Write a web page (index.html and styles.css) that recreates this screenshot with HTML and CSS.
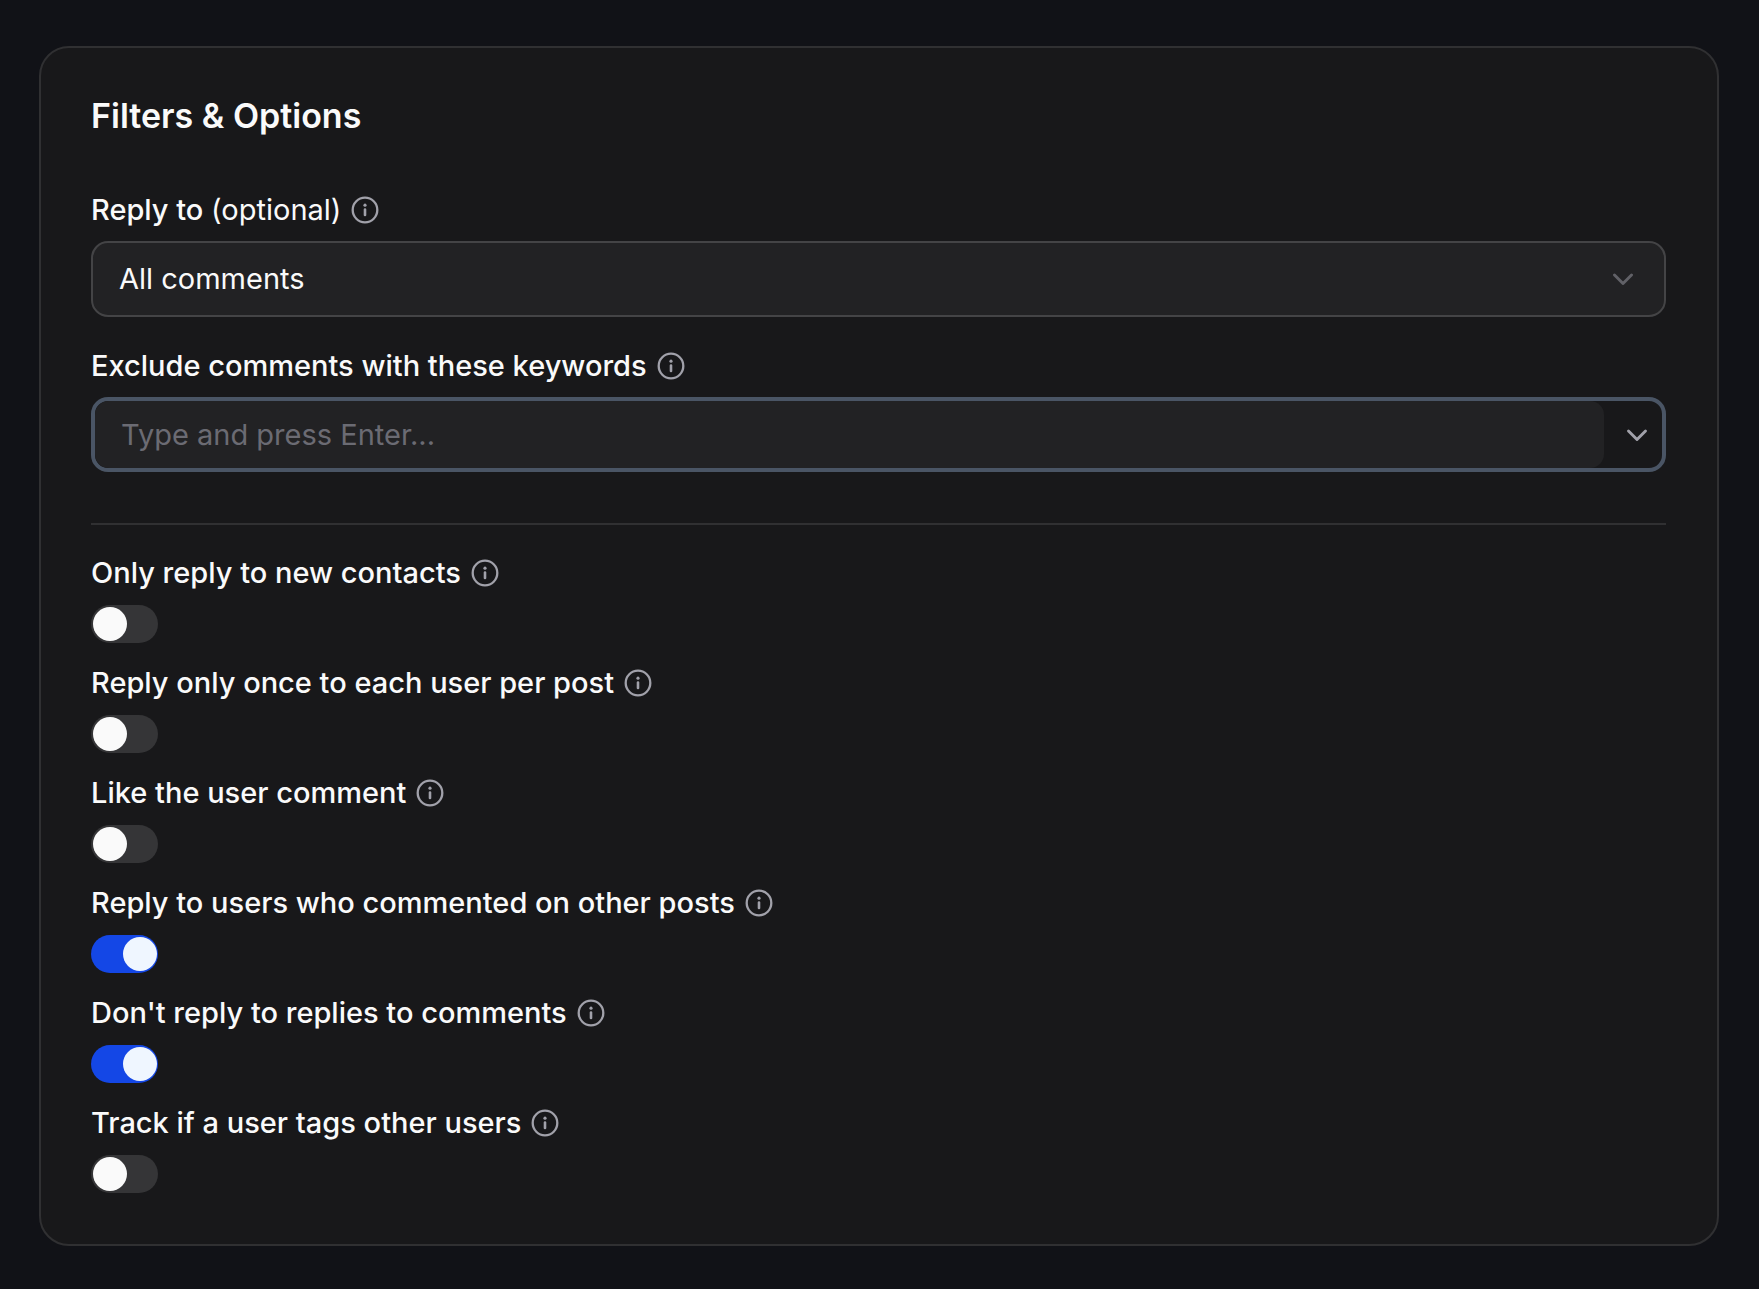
FILE: index.html
```html
<!DOCTYPE html>
<html lang="en">
<head>
<meta charset="utf-8">
<meta name="viewport" content="width=device-width, initial-scale=1">
<title>Filters &amp; Options</title>
<link rel="stylesheet" href="styles.css">
</head>
<body>
<svg class="sprite" aria-hidden="true">
  <symbol id="info" viewBox="0 0 28 28">
    <circle cx="14" cy="14" r="12.3" fill="none" stroke="currentColor" stroke-width="2.3"/>
    <path d="M14 13.600v5.400" fill="none" stroke="currentColor" stroke-width="2.600" stroke-linecap="round"/>
    <circle cx="14" cy="9.200" r="1.600" fill="currentColor"/>
  </symbol>
  <symbol id="chevron" viewBox="0 0 24 24">
    <path d="M3.500 8 12 16.500l8.500-8.500" fill="none" stroke="currentColor" stroke-width="2.900" stroke-linecap="round" stroke-linejoin="round"/>
  </symbol>
</svg>
<main class="card">
  <h1 class="title">Filters &amp; Options</h1>
  <form class="form">
    <div class="field">
      <div class="label-row">
        <label class="label" for="reply-to">Reply to <span class="optional">(optional)</span></label>
        <svg class="info"><use href="#info"/></svg>
      </div>
      <div class="select-box">
        <select class="select" id="reply-to"><option>All comments</option></select>
        <svg class="chevron"><use href="#chevron"/></svg>
      </div>
    </div>
    <div class="field">
      <div class="label-row">
        <label class="label" for="keywords">Exclude comments with these keywords</label>
        <svg class="info"><use href="#info"/></svg>
      </div>
      <div class="combo">
        <input class="combo-input" id="keywords" type="text" placeholder="Type and press Enter...">
        <button class="combo-button" type="button" aria-label="Show keywords"><svg class="chevron"><use href="#chevron"/></svg></button>
      </div>
    </div>
    <hr class="divider">
    <div class="options">
      <div class="option">
        <div class="label-row"><label class="label" for="new-contacts">Only reply to new contacts</label><svg class="info"><use href="#info"/></svg></div>
        <input class="switch" type="checkbox" role="switch" id="new-contacts">
      </div>
      <div class="option">
        <div class="label-row"><label class="label" for="once">Reply only once to each user per post</label><svg class="info"><use href="#info"/></svg></div>
        <input class="switch" type="checkbox" role="switch" id="once">
      </div>
      <div class="option">
        <div class="label-row"><label class="label" for="like">Like the user comment</label><svg class="info"><use href="#info"/></svg></div>
        <input class="switch" type="checkbox" role="switch" id="like">
      </div>
      <div class="option">
        <div class="label-row"><label class="label" for="other-posts">Reply to users who commented on other posts</label><svg class="info"><use href="#info"/></svg></div>
        <input class="switch" type="checkbox" role="switch" id="other-posts" checked>
      </div>
      <div class="option">
        <div class="label-row"><label class="label" for="no-replies">Don't reply to replies to comments</label><svg class="info"><use href="#info"/></svg></div>
        <input class="switch" type="checkbox" role="switch" id="no-replies" checked>
      </div>
      <div class="option">
        <div class="label-row"><label class="label" for="tags">Track if a user tags other users</label><svg class="info"><use href="#info"/></svg></div>
        <input class="switch" type="checkbox" role="switch" id="tags">
      </div>
    </div>
  </form>
</main>
</body>
</html>
```
FILE: styles.css
```css
* { box-sizing: border-box; }

body {
  margin: 0;
  padding: 46px 40px 43px 39px;
  background: #111217;
  color: #fafafa;
  font: 400 29px/38px Inter, sans-serif;
}

.sprite { display: none; }

.card {
  padding: 50px 51px 51px 50px;
  background: #18181a;
  border: 2px solid #303032;
  border-radius: 30px;
}

.title {
  margin: 0 0 57px;
  font-size: 34px;
  line-height: 36px;
  font-weight: 600;
}

.form { display: flex; flex-direction: column; }

.field { margin-bottom: 30px; }

.label-row {
  display: flex;
  align-items: center;
  gap: 10px;
}

.label { font-weight: 500; }
.optional { font-weight: 400; }

.info {
  flex: none;
  width: 28px;
  height: 28px;
  color: #a1a1aa;
}

.chevron {
  width: 24px;
  height: 24px;
  color: #a1a1aa;
}

.select-box {
  display: grid;
  grid-template-columns: 1fr 55px;
  align-items: center;
  margin-top: 12px;
}

.select {
  grid-area: 1 / 1 / 2 / 3;
  appearance: none;
  width: 100%;
  height: 76px;
  padding: 0 55px 0 26px;
  border: 2px solid #444446;
  border-radius: 17px;
  background: #222224;
  color: inherit;
  font: inherit;
}

.select-box .chevron {
  grid-area: 1 / 2;
  opacity: 0.5;
  pointer-events: none;
}

.combo {
  display: flex;
  height: 75px;
  margin-top: 12px;
  border: 4px solid #4a5565;
  border-radius: 17px;
}

.combo-input {
  flex: 1;
  min-width: 0;
  padding: 0 26px;
  border: 0;
  border-radius: 14px;
  background: #222224;
  color: inherit;
  font: inherit;
  outline: none;
}

.combo-input::placeholder { color: #6b6b73; opacity: 1; }

.combo-button {
  display: flex;
  align-items: center;
  justify-content: flex-end;
  width: 58px;
  padding: 0 13px 0 0;
  border: 0;
  background: none;
}

.divider {
  width: 100%;
  height: 2px;
  margin: 21px 0 29px;
  border: 0;
  background: #303032;
}

.options { display: flex; flex-direction: column; gap: 21px; }

.option { display: flex; flex-direction: column; gap: 13px; }

.switch {
  appearance: none;
  display: flex;
  width: 67px;
  height: 38px;
  margin: 0;
  padding: 2px 1px 2px 2px;
  border-radius: 19px;
  background: #353537;
}

.switch::before {
  content: "";
  width: 34px;
  height: 34px;
  border-radius: 50%;
  background: #fafafa;
}

.switch:checked { justify-content: flex-end; background: #1447e6; }
.switch:checked::before { background: #eff6ff; }
```
